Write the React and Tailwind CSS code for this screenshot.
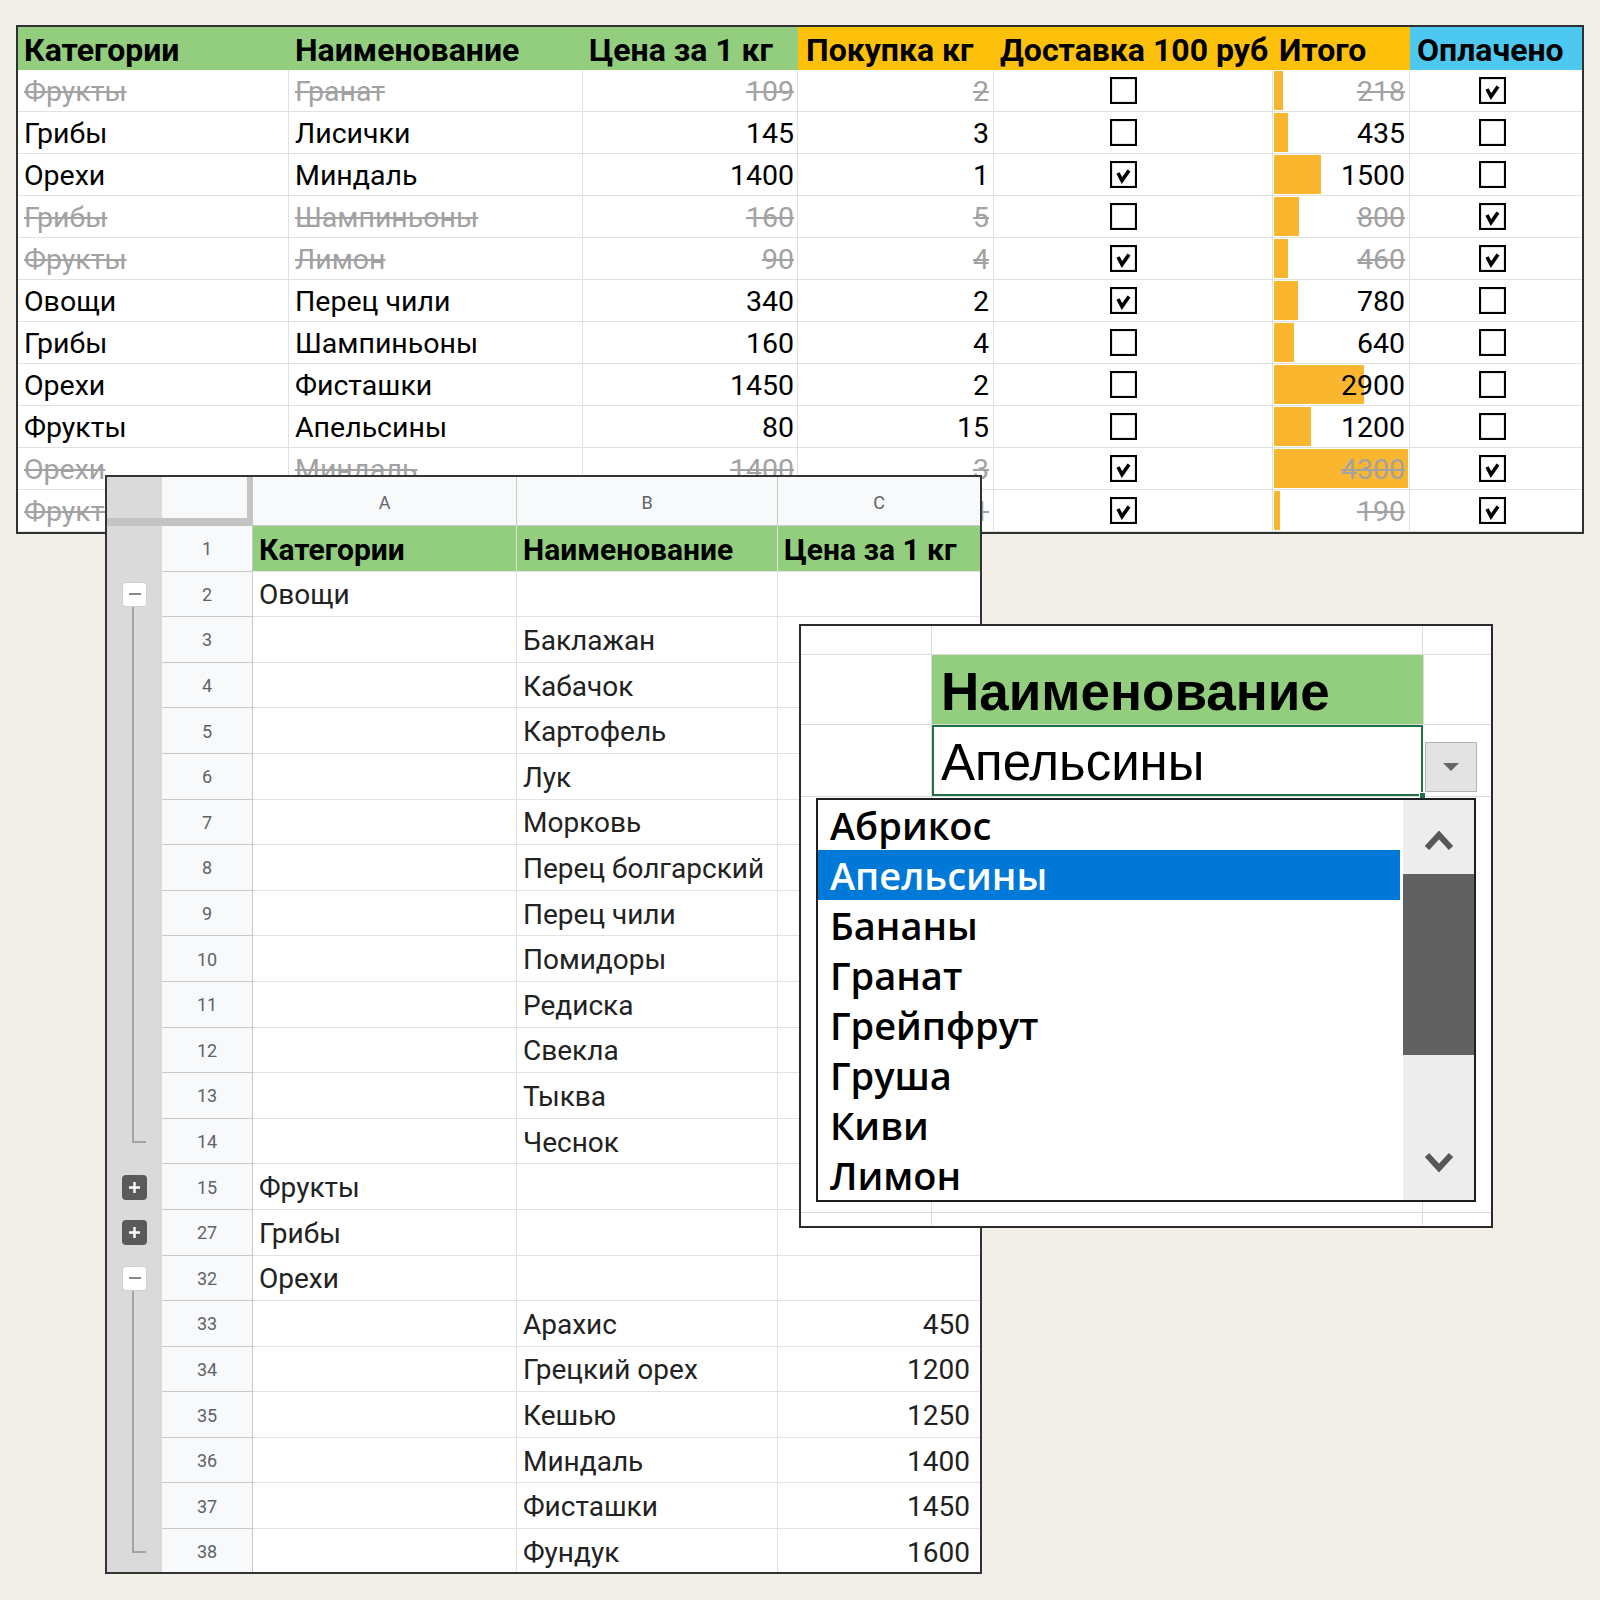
import React from 'react';

const COLS = 'grid grid-cols-[271px_294px_215px_196px_279px_137px_172px]';

const rows = [
  { cat: 'Фрукты', name: 'Гранат', price: 109, qty: 2, del: false, total: 218, paid: true, bar: 9 },
  { cat: 'Грибы', name: 'Лисички', price: 145, qty: 3, del: false, total: 435, paid: false },
  { cat: 'Орехи', name: 'Миндаль', price: 1400, qty: 1, del: true, total: 1500, paid: false },
  { cat: 'Грибы', name: 'Шампиньоны', price: 160, qty: 5, del: false, total: 800, paid: true },
  { cat: 'Фрукты', name: 'Лимон', price: 90, qty: 4, del: true, total: 460, paid: true },
  { cat: 'Овощи', name: 'Перец чили', price: 340, qty: 2, del: true, total: 780, paid: false },
  { cat: 'Грибы', name: 'Шампиньоны', price: 160, qty: 4, del: false, total: 640, paid: false },
  { cat: 'Орехи', name: 'Фисташки', price: 1450, qty: 2, del: false, total: 2900, paid: false },
  { cat: 'Фрукты', name: 'Апельсины', price: 80, qty: 15, del: false, total: 1200, paid: false },
  { cat: 'Орехи', name: 'Миндаль', price: 1400, qty: 3, del: true, total: 4300, paid: true },
  { cat: 'Фрукты', name: 'Лимон', price: 90, qty: 1, del: true, total: 190, paid: true },
];

function Check({ on }) {
  return (
    <svg width="27" height="27" viewBox="0 0 27 27" className="block">
      <rect x="1" y="1" width="25" height="25" fill="white" stroke="black" strokeWidth="2.2" />
      {on && (
        <path d="M8 12 L12 19.5 L19 9.5" fill="none" stroke="black" strokeWidth="3.6" strokeLinejoin="miter" />
      )}
    </svg>
  );
}

function TopTable() {
  return (
    <div className="absolute left-[16px] top-[25px] w-[1568px] border-2 border-[#303030] bg-white font-['Roboto',sans-serif]">
      <div className={`${COLS} h-[43px] text-[32px] font-bold text-black leading-none whitespace-nowrap`}>
        <div className="bg-[#93cd7e] flex items-center pl-[6px] pt-[2px]">Категории</div>
        <div className="bg-[#93cd7e] flex items-center pl-[6px] pt-[2px]">Наименование</div>
        <div className="bg-[#93cd7e] flex items-center pl-[6px] pt-[2px]">Цена за 1 кг</div>
        <div className="bg-[#fdc10b] flex items-center pl-[8px] pt-[2px]">Покупка кг</div>
        <div className="bg-[#fdc10b] flex items-center pl-[6px] pt-[2px]">Доставка 100 руб</div>
        <div className="bg-[#fdc10b] flex items-center pl-[6px] pt-[2px]">Итого</div>
        <div className="bg-[#4dc8f1] flex items-center pl-[7px] pt-[2px]">Оплачено</div>
      </div>
      {rows.map((r, i) => {
        const t = r.paid ? 'text-[#a2a2a2] line-through decoration-[#a2a2a2]' : 'text-black';
        const barW = r.bar ?? Math.round((r.total / 4300) * 134);
        return (
          <div key={i} className={`${COLS} h-[42px] text-[28.5px] leading-none`}>
            <div className="flex items-center pl-[6px] pt-[3px] border-r border-b border-[#e0e0e0]">
              <span className={t}>{r.cat}</span>
            </div>
            <div className="flex items-center pl-[6px] pt-[3px] border-r border-b border-[#e0e0e0]">
              <span className={t}>{r.name}</span>
            </div>
            <div className="flex items-center justify-end pr-[3px] pt-[3px] border-r border-b border-[#e0e0e0]">
              <span className={t}>{r.price}</span>
            </div>
            <div className="flex items-center justify-end pr-[4px] pt-[3px] border-r border-b border-[#e0e0e0]">
              <span className={t}>{r.qty}</span>
            </div>
            <div className="flex items-center pl-[116px] border-r border-b border-[#e0e0e0]">
              <Check on={r.del} />
            </div>
            <div className="relative flex items-center justify-end pr-[4px] pt-[3px] border-r border-b border-[#e0e0e0]">
              <div className="absolute left-[1px] top-[1px] bottom-[1px] bg-[#fbb630]" style={{ width: barW }} />
              <span className={`relative ${t}`}>{r.total}</span>
            </div>
            <div className="flex items-center pl-[69px] border-b border-[#e0e0e0]">
              <Check on={r.paid} />
            </div>
          </div>
        );
      })}
    </div>
  );
}

const orows = [
  { n: 1, a: 'Категории', b: 'Наименование', c: 'Цена за 1 кг', head: true },
  { n: 2, a: 'Овощи', ctrl: 'minus' },
  { n: 3, b: 'Баклажан', line: 'mid' },
  { n: 4, b: 'Кабачок', line: 'mid' },
  { n: 5, b: 'Картофель', line: 'mid' },
  { n: 6, b: 'Лук', line: 'mid' },
  { n: 7, b: 'Морковь', line: 'mid' },
  { n: 8, b: 'Перец болгарский', line: 'mid' },
  { n: 9, b: 'Перец чили', line: 'mid' },
  { n: 10, b: 'Помидоры', line: 'mid' },
  { n: 11, b: 'Редиска', line: 'mid' },
  { n: 12, b: 'Свекла', line: 'mid' },
  { n: 13, b: 'Тыква', line: 'mid' },
  { n: 14, b: 'Чеснок', line: 'end' },
  { n: 15, a: 'Фрукты', ctrl: 'plus' },
  { n: 27, a: 'Грибы', ctrl: 'plus' },
  { n: 32, a: 'Орехи', ctrl: 'minus' },
  { n: 33, b: 'Арахис', c: '450', line: 'mid' },
  { n: 34, b: 'Грецкий орех', c: '1200', line: 'mid' },
  { n: 35, b: 'Кешью', c: '1250', line: 'mid' },
  { n: 36, b: 'Миндаль', c: '1400', line: 'mid' },
  { n: 37, b: 'Фисташки', c: '1450', line: 'mid' },
  { n: 38, b: 'Фундук', c: '1600', line: 'end' },
];

function GroupCtrl({ r }) {
  return (
    <div className="relative w-[55px] bg-[#dadada] flex items-center justify-center">
      {r.ctrl === 'minus' && (
        <>
          <div className="relative z-10 w-[25px] h-[25px] rounded-[4px] bg-white border border-[#d0d0d0] flex items-center justify-center">
            <div className="w-[12px] h-[2px] bg-[#8a8a8a]" />
          </div>
          <div className="absolute left-[25px] top-[30px] bottom-0 w-[2px] bg-[#a3a3a3]" />
        </>
      )}
      {r.ctrl === 'plus' && (
        <div className="w-[25px] h-[25px] rounded-[4px] bg-[#5a5a5a] flex items-center justify-center">
          <svg width="15" height="15" viewBox="0 0 15 15">
            <path d="M7.5 2 V13 M2 7.5 H13" stroke="white" strokeWidth="2.4" />
          </svg>
        </div>
      )}
      {r.line === 'mid' && <div className="absolute left-[25px] top-0 bottom-0 w-[2px] bg-[#a3a3a3]" />}
      {r.line === 'end' && (
        <>
          <div className="absolute left-[25px] top-0 h-[23px] w-[2px] bg-[#a3a3a3]" />
          <div className="absolute left-[25px] top-[22px] w-[14px] h-[2px] bg-[#a3a3a3]" />
        </>
      )}
    </div>
  );
}

function Outline() {
  return (
    <div className="absolute left-[105px] top-[475px] w-[877px] h-[1099px] border-2 border-[#333] bg-white font-['Roboto',sans-serif] overflow-hidden">
      <div className="flex h-[49px]">
        <div className="w-[55px] bg-[#dadada] border-b-[8px] border-[#c4c4c4]" />
        <div className="w-[85px] bg-[#f8f9fa] border-b-[8px] border-[#c4c4c4]" />
        <div className="w-[6px] bg-[#c4c4c4]" />
        <div className="w-[264px] bg-[#f8f9fa] border-r border-b border-[#c9c9c9] flex items-center justify-center pt-[2px] text-[18px] text-[#5f6368]">A</div>
        <div className="w-[261px] bg-[#f8f9fa] border-r border-b border-[#c9c9c9] flex items-center justify-center pt-[2px] text-[18px] text-[#5f6368]">B</div>
        <div className="flex-1 bg-[#f8f9fa] border-b border-[#c9c9c9] flex items-center justify-center pt-[2px] text-[18px] text-[#5f6368]">C</div>
      </div>
      {orows.map((r) => (
        <div key={r.n} className="flex h-[45.6px] leading-none">
          <GroupCtrl r={r} />
          <div className="w-[91px] bg-[#f8f9fa] border-r border-b border-[#c9c9c9] flex items-center justify-center pt-[2px] text-[18px] text-[#5f6368]">
            {r.n}
          </div>
          <div className={`w-[264px] border-r border-b border-[#e2e2e2] flex items-center pl-[6px] pt-[3px] ${r.head ? 'bg-[#93cd7e] font-bold text-[30px] text-black' : 'text-[28px] text-[#222]'}`}>
            {r.a}
          </div>
          <div className={`w-[261px] border-r border-b border-[#e2e2e2] flex items-center pl-[6px] pt-[3px] ${r.head ? 'bg-[#93cd7e] font-bold text-[30px] text-black' : 'text-[28px] text-[#222]'}`}>
            {r.b}
          </div>
          <div className={`flex-1 border-b border-[#e2e2e2] flex items-center pt-[3px] ${r.head ? 'bg-[#93cd7e] font-bold text-[30px] text-black pl-[6px] whitespace-nowrap' : 'text-[28px] text-[#222] justify-end pr-[10px]'}`}>
            {r.c}
          </div>
        </div>
      ))}
    </div>
  );
}

function Chevron({ up }) {
  return (
    <svg width="30" height="22" viewBox="0 0 30 22" className="block">
      <polyline
        points={up ? '3,19 15,6 27,19' : '3,3 15,16 27,3'}
        fill="none"
        stroke="#585858"
        strokeWidth="6"
        strokeLinejoin="miter"
      />
    </svg>
  );
}

const items = ['Абрикос', 'Апельсины', 'Бананы', 'Гранат', 'Грейпфрут', 'Груша', 'Киви', 'Лимон'];

function Dropdown() {
  return (
    <div className="absolute left-[799px] top-[624px] w-[694px] h-[604px] border-2 border-[#2b2b2b] bg-white flex flex-col font-['Liberation_Sans',Arial,sans-serif]">
      <div className="flex h-[29px] border-b border-[#dcdcdc]">
        <div className="w-[131px] border-r border-[#dcdcdc]" />
        <div className="w-[491px] border-r border-[#dcdcdc]" />
        <div className="flex-1" />
      </div>
      <div className="flex h-[70px] border-b border-[#dcdcdc]">
        <div className="w-[131px] border-r border-[#dcdcdc]" />
        <div className="w-[491px] bg-[#93cd7e] flex items-center pl-[9px] pt-[4px] text-[53px] font-bold text-black leading-none whitespace-nowrap">
          Наименование
        </div>
        <div className="flex-1 border-l border-[#dcdcdc]" />
      </div>
      <div className="flex h-[72px] border-b border-[#dcdcdc]">
        <div className="w-[131px] border-r border-[#dcdcdc]" />
        <div className="relative w-[491px] border-2 border-[#1f7244] flex items-center pl-[7px] pt-[4px] text-[51px] text-black leading-none">
          Апельсины
          <div className="absolute right-[-5px] bottom-[-5px] w-[7px] h-[7px] bg-[#1f7244] border border-white" />
        </div>
        <div className="flex-1" />
      </div>
      <div className="flex h-[416px] border-b border-[#dcdcdc]">
        <div className="w-[131px] border-r border-[#dcdcdc]" />
        <div className="w-[491px] border-r border-[#dcdcdc]" />
        <div className="flex-1" />
      </div>
      <div className="flex flex-1">
        <div className="w-[131px] border-r border-[#dcdcdc]" />
        <div className="w-[491px] border-r border-[#dcdcdc]" />
        <div className="flex-1" />
      </div>

      <div className="absolute left-[624px] top-[116px] w-[52px] h-[50px] bg-[#e3e3e3] border border-[#b3b3b3] flex items-center justify-center">
        <svg width="18" height="10" viewBox="0 0 18 10">
          <polygon points="1,1 17,1 9,9" fill="#666" />
        </svg>
      </div>

      <div className="absolute left-[15px] top-[172px] w-[660px] h-[404px] border-2 border-[#1e1e1e] bg-white flex font-['Open_Sans',sans-serif]">
        <div className="flex-1 flex flex-col pr-[3px]">
          {items.map((it, i) => (
            <div
              key={it}
              className={`h-[50px] flex items-center pl-[12px] text-[38px] font-semibold leading-none ${i === 1 ? 'bg-[#0078d7] text-white' : 'text-black'}`}
            >
              {it}
            </div>
          ))}
        </div>
        <div className="w-[71px] bg-[#ededed] flex flex-col">
          <div className="h-[74px] flex items-center justify-center pt-[6px]">
            <Chevron up />
          </div>
          <div className="h-[181px] bg-[#616161]" />
          <div className="flex-1 flex items-end justify-center pb-[26px]">
            <Chevron />
          </div>
        </div>
      </div>
    </div>
  );
}

export default function App() {
  return (
    <div className="relative w-[1600px] h-[1600px] bg-[#f2eee8] overflow-hidden">
      <TopTable />
      <Outline />
      <Dropdown />
    </div>
  );
}
